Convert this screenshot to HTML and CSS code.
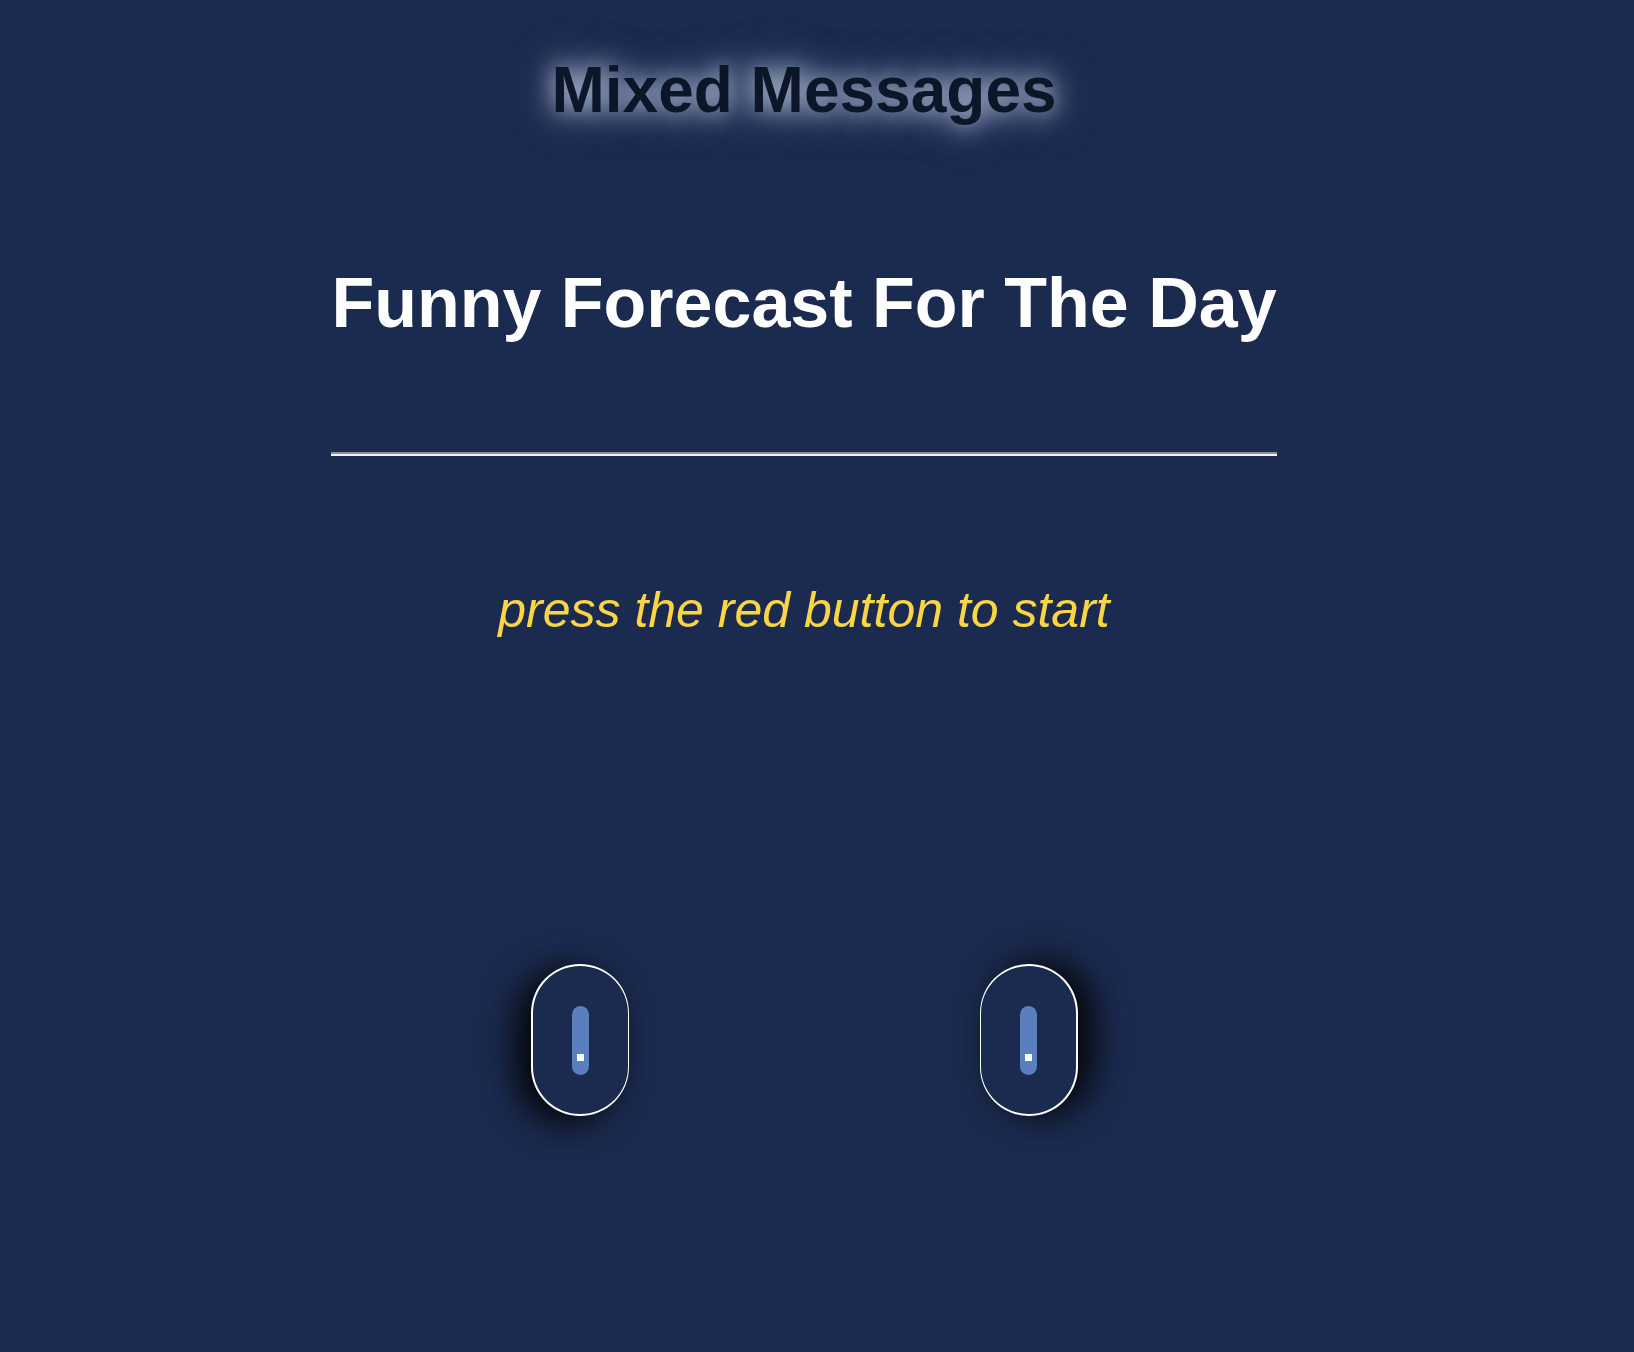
FILE: index.html
```html
<!DOCTYPE html>
<html lang="en">
<head>
<meta charset="utf-8">
<title>Mixed Messages</title>
<link rel="stylesheet" href="styles.css">
</head>
<body>
<div class="page">
  <header class="site-header">
    <h1 class="site-title">Mixed Messages</h1>
  </header>
  <main class="forecast">
    <h2 class="forecast-title">Funny Forecast For The Day</h2>
    <div class="divider"></div>
    <p class="forecast-message">press the red button to start</p>
    <div class="controls">
      <button class="switch switch-left" type="button" aria-label="left switch">
        <span class="switch-bar"><span class="switch-dot"></span></span>
      </button>
      <button class="switch switch-right" type="button" aria-label="right switch">
        <span class="switch-bar"><span class="switch-dot"></span></span>
      </button>
    </div>
  </main>
</div>
</body>
</html>
```

FILE: styles.css
```css
html, body {
  margin: 0;
  padding: 0;
  background: #1b2b4f;
  min-height: 100%;
}

body {
  font-family: "Liberation Sans", Arial, sans-serif;
}

.page {
  margin-right: 26px;
  display: flex;
  flex-direction: column;
  align-items: center;
  min-height: 1352px;
}

.site-header {
  padding-top: 50px;
}

.site-title {
  margin: 0;
  font-size: 64px;
  line-height: 80px;
  font-weight: 700;
  color: #0b1628;
  text-shadow: 0 0 24px rgba(215, 225, 245, 0.95), 0 0 46px rgba(160, 175, 215, 0.55);
}

.forecast {
  display: flex;
  flex-direction: column;
  align-items: center;
}

.forecast-title {
  margin: 133px 0 0;
  font-size: 70px;
  line-height: 80px;
  font-weight: 700;
  color: #ffffff;
}

.divider {
  width: 946px;
  margin-top: 109px;
  border-top: 2px solid #8c8f96;
  border-bottom: 2px solid #f2f2f2;
}

.forecast-message {
  margin: 124px 0 0;
  font-size: 50px;
  line-height: 60px;
  font-style: italic;
  color: #fbd545;
}

.controls {
  margin-top: 324px;
  display: flex;
  gap: 351px;
}

.switch {
  box-sizing: border-box;
  width: 98px;
  height: 152px;
  padding: 0;
  border-radius: 49px;
  background: #1b2b50;
  border-style: solid;
  border-color: #ffffff;
  display: flex;
  align-items: center;
  justify-content: center;
  cursor: pointer;
}

.switch-left {
  border-width: 2px 1px 2px 2px;
  box-shadow: -14px 6px 36px rgba(0, 0, 0, 0.95);
}

.switch-right {
  border-width: 2px 2px 2px 1px;
  box-shadow: 14px -2px 36px rgba(0, 0, 0, 0.95);
}

.switch-bar {
  position: relative;
  width: 17px;
  height: 69px;
  border-radius: 9px;
  background: #5a7fbf;
  display: flex;
  justify-content: center;
}

.switch-dot {
  position: absolute;
  bottom: 14px;
  width: 7px;
  height: 7px;
  background: #ffffff;
}
```
